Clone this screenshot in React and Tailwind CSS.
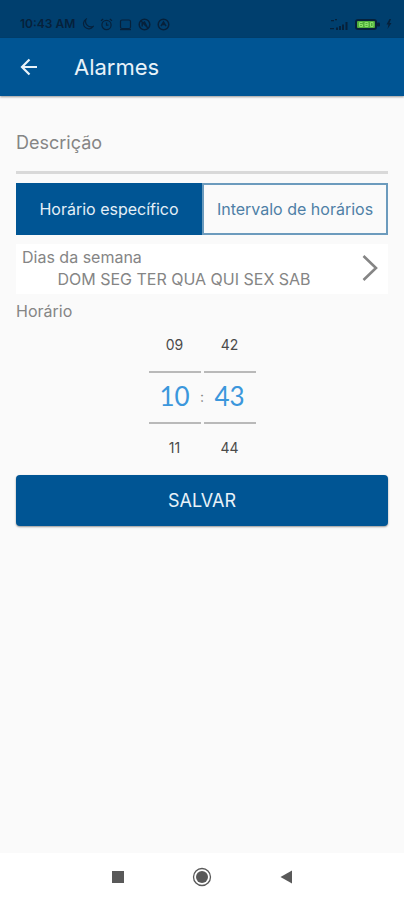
import { useState } from "react";

const pad = (n) => String(n).padStart(2, "0");

function StatusBar() {
  return (
    <div className="flex h-[38px] items-center justify-between bg-[#003f6e] pt-2.5 pr-3 pl-5 text-[#06213b]">
      <div className="flex items-center gap-[6px]">
        <span className="font-['Inter'] text-[12px] leading-4 font-semibold">10:43 AM</span>
        <svg className="size-[13px]" viewBox="0 0 13 13" fill="none" stroke="currentColor" strokeWidth="1.2">
          <path d="M5 1.2A5.2 5.2 0 1 0 12 8.6 5.6 5.6 0 0 1 5 1.2Z" />
        </svg>
        <svg className="size-[13px]" viewBox="0 0 13 13" fill="none" stroke="currentColor" strokeWidth="1.2">
          <circle cx="6.5" cy="7" r="4.6" />
          <path d="M6.5 4.5V7.2H8.5M1 2.8 3.2 1M12 2.8 9.8 1" />
        </svg>
        <svg className="size-[13px]" viewBox="0 0 13 13" fill="none" stroke="currentColor" strokeWidth="1.2">
          <rect x="1.5" y="2" width="10" height="8.5" rx="1.5" />
          <path d="M1 11.6H12" />
        </svg>
        <svg className="size-[13px]" viewBox="0 0 13 13" fill="none" stroke="currentColor" strokeWidth="1.5">
          <circle cx="6.5" cy="6.5" r="5.3" />
          <path d="M4.2 8.5V5.5L6.5 4 9 8.8M3 3 10 10" />
        </svg>
        <svg className="size-[13px]" viewBox="0 0 13 13" fill="none" stroke="currentColor" strokeWidth="1.5">
          <circle cx="6.5" cy="6.5" r="5.3" />
          <path d="M4 8.2 6.5 4 9 8.2M5 6.6H8" />
        </svg>
      </div>
      <div className="flex items-center gap-[6px]">
        <svg className="h-[13px] w-[20px]" viewBox="0 0 20 13" fill="currentColor">
          <path d="M2 2h3v1.2H2zM6 1h2v1.2H6zM1 10h4v1.2H1zM7 9.500h2V12H7zM10 8h2v4h-2zM13 6.500h2V12h-2zM16.500 4h2v8h-2z" />
        </svg>
        <svg className="h-[11px] w-[25px]" viewBox="0 0 25 11">
          <rect width="22" height="11" rx="3" fill="#06213b" />
          <rect x="22" y="3.500" width="3" height="4" rx="1" fill="#06213b" />
          <rect x="2" y="2" width="18" height="7" rx="1" fill="#4fae3c" />
          <path d="M7.500 3.500H4.500V7.500H7.500V5.500H4.500M10 3.500H13V7.500H10ZM10 5.500H13M15.500 3.500H18V7.500H15.500Z" fill="none" stroke="#8be06a" />
        </svg>
        <svg className="h-[10px] w-[6px]" viewBox="0 0 6 10" fill="currentColor">
          <path d="M3.500 0 0.500 5.500H2.500L1.500 10 5.500 4H3.500L5 0Z" />
        </svg>
      </div>
    </div>
  );
}

function Wheel({ label, value, count, onChange }) {
  const prev = (value + count - 1) % count;
  const next = (value + 1) % count;
  return (
    <div className="flex w-[52px] flex-col">
      <button type="button" onClick={() => onChange(prev)} className="h-[48px] pb-1 text-sm text-[#4a4a4a]">
        {pad(prev)}
      </button>
      <input
        aria-label={label}
        value={pad(value)}
        onChange={(e) => onChange((parseInt(e.target.value, 10) || 0) % count)}
        className="h-[53px] w-full border-y-2 border-[#b9b9b9] bg-transparent pb-1 text-center font-['Lato',sans-serif] text-[26px] text-[#3b97dc] outline-none"
      />
      <button type="button" onClick={() => onChange(next)} className="h-[50px] pb-0.5 text-sm text-[#4a4a4a]">
        {pad(next)}
      </button>
    </div>
  );
}

export default function App() {
  const [mode, setMode] = useState("specific");
  const [hour, setHour] = useState(10);
  const [minute, setMinute] = useState(43);
  const tab = (active) =>
    active
      ? "border-[#005594] bg-[#005594] text-[#e4eff7]"
      : "border-[#6c9bbd] bg-[#fafafa] text-[#4e7fa6]";

  return (
    <div className="flex min-h-screen flex-col bg-[#fafafa] font-['Inter',sans-serif] text-[#858585]">
      <StatusBar />
      <header className="flex h-[58px] items-center gap-8 bg-[#005594] px-4 text-[#e8f2f9] shadow-[0_1px_2px_rgba(0,0,0,0.4)]">
        <button type="button" aria-label="Voltar" className="flex size-[26px] items-center justify-center">
          <svg className="size-[18px]" viewBox="0 0 18 18" fill="none" stroke="currentColor" strokeWidth="2.200">
            <path d="M17 9H2M9.500 1.500 2 9 9.500 16.500" />
          </svg>
        </button>
        <h1 className="text-[22px]">Alarmes</h1>
      </header>

      <main className="flex flex-1 flex-col px-4 pt-6">
        <input
          type="text"
          aria-label="Descrição"
          placeholder="Descrição"
          className="h-[54px] w-full border-b-3 border-[#d9d9d9] bg-transparent pb-1.5 text-[18px] outline-none placeholder:text-[#858585]"
        />
        <div className="mt-[9px] flex h-[52px] text-[16px]">
          <button type="button" onClick={() => setMode("specific")} className={"flex-1 border-2 " + tab(mode === "specific")}>
            Horário específico
          </button>
          <button type="button" onClick={() => setMode("range")} className={"flex-1 border-2 " + tab(mode === "range")}>
            Intervalo de horários
          </button>
        </div>
        <button type="button" className="mt-[9px] flex h-[50px] items-center bg-white pr-2.5 pb-0.5 pl-1.5 text-left">
          <span className="flex flex-1 flex-col">
            <span className="text-[16px] leading-[22px]">Dias da semana</span>
            <span className="pr-4 text-center text-[16px] leading-[22px]">DOM SEG TER QUA QUI SEX SAB</span>
          </span>
          <svg className="h-[26px] w-[16px]" viewBox="0 0 16 26" fill="none" stroke="#858585" strokeWidth="2.600">
            <path d="M1.500 1 14 13 1.500 25" />
          </svg>
        </button>
        <h2 className="mt-[5px] text-[16px] leading-[24px]">Horário</h2>
        <div className="relative flex justify-center gap-[3px]">
          <Wheel label="Hora" value={hour} count={24} onChange={setHour} />
          <span className="absolute inset-0 m-auto h-6 w-2 text-center text-sm leading-5">:</span>
          <Wheel label="Minuto" value={minute} count={60} onChange={setMinute} />
        </div>
        <button
          type="button"
          className="mt-px h-[51px] rounded-[4px] bg-[#005594] text-[18px] text-[#e8f2f9] shadow-[0_1px_2px_rgba(0,0,0,0.4)]"
        >
          SALVAR
        </button>
      </main>

      <nav aria-label="Sistema" className="flex h-[47px] items-center justify-center gap-9 bg-white text-[#595959]">
        <button type="button" aria-label="Recentes" className="flex size-12 items-center justify-center">
          <span className="size-3 bg-current" />
        </button>
        <button type="button" aria-label="Início" className="flex size-12 items-center justify-center">
          <svg className="size-5" viewBox="0 0 20 20">
            <circle cx="10" cy="10" r="8.500" fill="none" stroke="currentColor" strokeWidth="1.300" />
            <circle cx="10" cy="10" r="6" fill="currentColor" />
          </svg>
        </button>
        <button type="button" aria-label="Anterior" className="flex size-12 items-center justify-center">
          <svg className="h-[14px] w-3" viewBox="0 0 12 14" fill="currentColor">
            <path d="M12 0.500V13.500L0.500 7Z" />
          </svg>
        </button>
      </nav>
    </div>
  );
}
